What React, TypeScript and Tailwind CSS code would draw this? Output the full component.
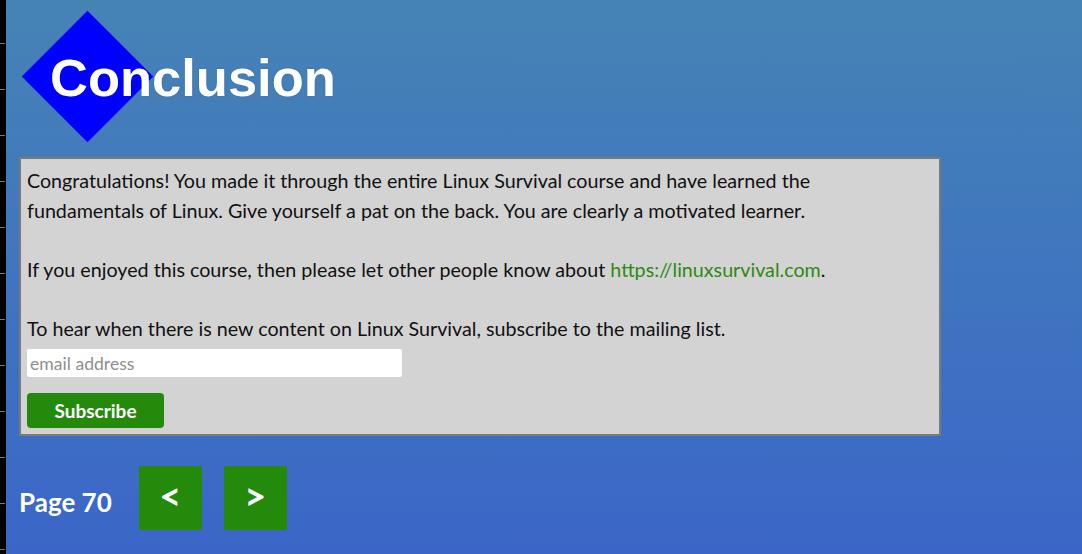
const ticks = Array.from({ length: 12 }, (_, i) => i);

function Sidebar() {
  return (
    <div className="w-[6px] shrink-0 bg-black flex flex-col pt-[43px] gap-[45px]">
      {ticks.map((t) => (
        <div key={t} className="h-px w-[5px] bg-[#777]" />
      ))}
    </div>
  );
}

function NavButton({ label }: { label: string }) {
  return (
    <button className="w-[63px] h-[64px] rounded-[2px] bg-[#238a0c] text-white text-[38px] font-bold leading-none flex items-center justify-center pb-[6px]">
      {label}
    </button>
  );
}

export default function App() {
  return (
    <div
      className="flex h-[554px] w-[1082px] overflow-hidden bg-gradient-to-b from-[#4683b5] to-[#3b66c8]"
      style={{ fontFamily: 'Lato, "Open Sans", sans-serif' }}
    >
      <Sidebar />
      <div className="flex-1 pl-[13px]">
        {/* Heading with diamond */}
        <div className="relative h-[157px]">
          <div className="absolute left-[22px] top-[30px] h-[93px] w-[93px] rotate-45 bg-[#0000ff]" />
          <h1
            className="absolute left-[31px] top-[52px] text-[52.5px] font-bold leading-none text-white [text-shadow:0_0_2px_rgba(0,0,0,0.15)]"
            style={{ fontFamily: '"Liberation Sans", Arial, sans-serif' }}
          >
            Conclusion
          </h1>
        </div>

        {/* Content box */}
        <div className="w-[922px] border-2 border-[#7a7a7a] bg-[#d3d3d3] px-[6px] pt-[7px] pb-[6px] text-[19.7px] leading-[1.5] text-[#111]">
          <div className="max-w-[880px]">
            <p>
              Congratulations! You made it through the entire Linux Survival course and have learned the fundamentals of Linux. Give yourself a pat on the back. You are clearly a motivated learner.
            </p>
            <br />
            <p>
              If you enjoyed this course, then please let other people know about{' '}
              <a className="text-[#2d8a10]">https://linuxsurvival.com</a>.
            </p>
            <br />
            <p>To hear when there is new content on Linux Survival, subscribe to the mailing list.</p>
          </div>
          <input
            type="email"
            placeholder="email address"
            className="mt-[6px] block h-[28px] w-[375px] rounded-[2px] bg-white px-[3px] text-[17.6px] leading-none text-black placeholder:text-[#8f8f8f] outline-none"
          />
          <button className="mt-[16px] block h-[35px] w-[137px] rounded-[4px] bg-[#238a0c] text-[19px] font-bold leading-none text-white">
            Subscribe
          </button>
        </div>

        {/* Pagination */}
        <div className="mt-[30px] flex items-center">
          <span className="mt-[9px] text-[26px] font-bold text-white">Page 70</span>
          <div className="ml-[27px] flex gap-[22px]">
            <NavButton label="<" />
            <NavButton label=">" />
          </div>
        </div>
      </div>
    </div>
  );
}
